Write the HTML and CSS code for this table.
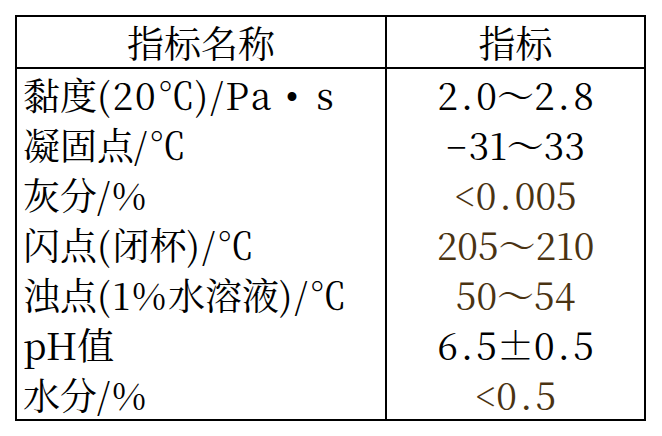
FILE: index.html
```html
<!DOCTYPE html>
<html lang="zh-CN">
<head>
    <meta charset="UTF-8">
    <meta name="viewport" content="width=device-width, initial-scale=1.0">
    <title>指标</title>
    <link rel="stylesheet" href="styles.css">
</head>
<body>
    <table class="spec-table">
        <thead>
            <tr>
                <th class="name-col">指标名称</th>
                <th class="value-col">指标</th>
            </tr>
        </thead>
        <tbody>
            <tr>
                <td class="name-col">黏度<span class="lat">(20</span>℃<span class="lat">)/Pa</span><span class="bullet">•</span>s</td>
                <td class="value-col">2<span class="dot">.</span>0～2<span class="dot">.</span>8</td>
            </tr>
            <tr>
                <td class="name-col">凝固点<span class="lat">/</span>℃</td>
                <td class="value-col"><span class="minus">−</span>31～33</td>
            </tr>
            <tr>
                <td class="name-col">灰分<span class="lat">/%</span></td>
                <td class="value-col brown">&lt;0<span class="dot">.</span>005</td>
            </tr>
            <tr>
                <td class="name-col">闪点<span class="lat">(</span>闭杯<span class="lat">)/</span>℃</td>
                <td class="value-col brown">205～210</td>
            </tr>
            <tr>
                <td class="name-col">浊点<span class="lat">(1%</span>水溶液<span class="lat">)/</span>℃</td>
                <td class="value-col brown">50～54</td>
            </tr>
            <tr>
                <td class="name-col">pH值</td>
                <td class="value-col">6<span class="dot">.</span>5±0<span class="dot">.</span>5</td>
            </tr>
            <tr>
                <td class="name-col">水分<span class="lat">/%</span></td>
                <td class="value-col brown">&lt;0<span class="dot">.</span>5</td>
            </tr>
        </tbody>
    </table>
</body>
</html>
```

FILE: styles.css
```css
body {
    margin: 0;
    padding: 15px;
    background-color: #ffffff;
    color: #000000;
    font-family: "Noto Serif CJK SC", "Liberation Serif", serif;
    font-size: 37px;
}
.spec-table {
    border-collapse: collapse;
    border: 2px solid #000;
    width: 631px;
}
.spec-table th,
.spec-table td {
    padding: 0;
    height: 50px;
    line-height: 50px;
    font-weight: normal;
    white-space: nowrap;
}
.spec-table th {
    border-bottom: 2px solid #000;
    text-align: center;
}
.name-col {
    width: 362px;
    border-right: 2px solid #000;
    text-align: left;
    padding-left: 6px !important;
}
.spec-table th.name-col {
    text-align: center;
    padding-left: 0 !important;
}
.value-col {
    text-align: center;
}
.brown {
    color: #4a3312;
}
.lat {
    letter-spacing: 2px;
}
.dot {
    display: inline-block;
    width: 0.5em;
    text-align: center;
}
.bullet,
.minus {
    font-family: "Liberation Serif", serif;
    line-height: 1;
}
.bullet {
    padding: 0 18px 0 12px;
}
.minus {
    margin-right: 2px;
}
```
